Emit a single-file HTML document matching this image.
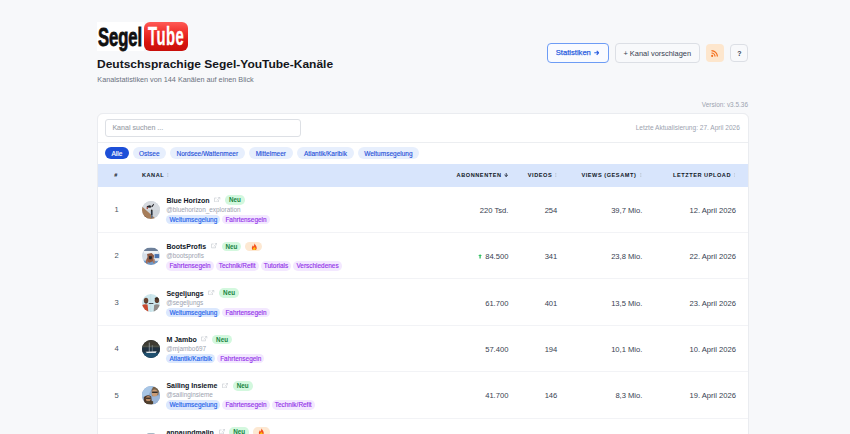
<!DOCTYPE html>
<html><head><meta charset="utf-8">
<style>
*{box-sizing:border-box;margin:0;padding:0}
html,body{width:850px;height:434px;overflow:hidden}
body{background:#f7f8fa;font-family:"Liberation Sans",sans-serif;color:#111827;position:relative}
.abs{position:absolute}
.nw{white-space:nowrap}
/* logo */
.logo{left:96.8px;top:21.9px;width:91.4px;height:29.4px}
.logo .wb{position:absolute;left:0;top:0;width:47.5px;height:29.4px;background:#fff}
.logo .seg{position:absolute;left:1.2px;top:0.9px;font-weight:bold;font-size:25.2px;line-height:29.4px;color:#111;transform:scaleX(0.66);transform-origin:0 0;letter-spacing:-0.1px;-webkit-text-stroke:0.8px #111}
.logo .red{position:absolute;left:46.9px;top:0;width:44.5px;height:29.4px;border-radius:6px;background:linear-gradient(#ff5a55 0%,#f0312c 35%,#d9140f 70%,#c80f0a 100%)}
.logo .tube{position:absolute;left:4.3px;top:0.5px;font-weight:bold;font-size:26px;line-height:29.4px;color:#fff;transform:scaleX(0.57);transform-origin:0 0;letter-spacing:0.9px;-webkit-text-stroke:0.3px #fff}
h1{position:absolute;left:96.9px;top:58px;font-size:10.5px;line-height:12px;font-weight:bold;color:#14161b;transform:scaleX(1.142);transform-origin:0 0;white-space:nowrap}
.sub{left:97.3px;top:74.5px;font-size:7.25px;line-height:9px;color:#6b7280}
.btn{position:absolute;height:19.4px;border-radius:4px;font-size:7.3px;line-height:17.4px;text-align:center;white-space:nowrap}
.b1{-webkit-text-stroke:0.25px currentColor;left:547px;top:43.2px;width:62px;border:1px solid #6d9cf5;color:#2b5fe0;background:#f9fbff}
.b2{padding-top:0.8px;font-size:7.45px;left:614.6px;top:43.2px;width:85.3px;border:1px solid #dcdfe5;color:#374151;background:#f8f9fb}
.b3{left:706.2px;top:43.8px;width:17.6px;height:18px;background:#fde6cd;border-radius:4px}
.b4{left:730.3px;top:44px;width:18.2px;height:18px;border:1px solid #dcdfe5;background:#f8f9fb;font-size:7px;line-height:17.6px;font-weight:bold;color:#374151}
.ver{right:102px;top:99.5px;font-size:6.45px;line-height:9px;color:#9ca3af}
.card{left:96.6px;top:112.5px;width:652.2px;height:340px;background:#fff;border:1px solid #eaecf0;border-radius:6px;box-shadow:0 0.5px 1px rgba(0,0,0,0.03)}
.search{left:105.2px;top:119.4px;width:195.6px;height:17.2px;border:1px solid #dde0e5;border-radius:3px;background:#fff}
.search span{position:absolute;left:6.2px;top:3.5px;font-size:7.1px;line-height:9px;color:#9aa0a9;-webkit-text-stroke:0.1px currentColor}
.upd{right:110.2px;top:123.4px;font-size:6.55px;line-height:9px;color:#9ca3af}
.sep{left:98px;top:142px;width:650.2px;height:1px;background:#eceef1}
.pill{position:absolute;top:147.4px;text-align:center;-webkit-text-stroke:0.12px currentColor;height:12px;border-radius:6px;background:#e7effd;color:#1d4ed8;font-size:6.5px;line-height:14.4px;white-space:nowrap}
.pill.on{background:#1d4fd8;color:#fff}
.thead{left:98px;top:163.8px;width:650.2px;height:22.9px;background:#d8e5fc}
.th{position:absolute;top:7.2px;font-size:5.6px;line-height:9px;font-weight:bold;letter-spacing:0.55px;color:#111827;white-space:nowrap}
.sico{position:absolute;top:9.3px;width:1.6px;height:4px}.sico svg{display:block}
.row{position:absolute;left:98px;width:650.2px;height:46.4px;border-bottom:1px solid #f2f3f6}
.num{position:absolute;left:16.6px;font-size:7.6px;line-height:9px;color:#4b5563}
.av{position:absolute;left:43.7px;width:18.2px;height:18.2px;border-radius:50%;overflow:hidden}
.name{position:absolute;left:68.4px;font-size:7px;line-height:9px;font-weight:bold;color:#111827;white-space:nowrap;display:flex;align-items:center}
.ext{display:inline-block;width:6.3px;height:5.3px;margin-left:4.7px;position:relative;top:-0.6px}
.badge{display:inline-block;height:9.6px;border-radius:4.8px;font-size:6.3px;line-height:10.8px;padding:0 3.9px;background:#d3f8de;color:#16833f;font-weight:bold;margin-left:4.5px}
.fire{background:#fde8d2;padding:0 5.1px;margin-left:4.2px;font-size:6px}
.handle{position:absolute;left:68.2px;font-size:6.4px;line-height:9px;color:#9ca3af;white-space:nowrap}
.tags{position:absolute;left:68.4px;display:flex;gap:2.2px}
.tag{height:9.6px;border-radius:4.8px;font-size:6.45px;line-height:10px;padding:0 3px;white-space:nowrap;-webkit-text-stroke:0.15px currentColor}
.tb{background:#dbe8fe;color:#2563eb}
.tp{background:#f3e8ff;color:#9333ea}
.cell{position:absolute;font-size:7.6px;line-height:9px;color:#374151;white-space:nowrap;text-align:right}
.num{top:18.4px}
.av{top:14.1px}
.name{top:9.1px;height:9px}
.name .badge{position:relative;top:0}
.handle{top:18.2px}
.tags{top:28px}
.cell{top:19px}
.c1{right:239.8px}.c2{right:190.9px}.c3{right:105.8px}.c4{right:12.3px}
.up{margin-right:2.9px;vertical-align:0.2px}
.si{color:#9ca3af;font-weight:normal;letter-spacing:0}
.arr{letter-spacing:0}
</style></head><body>
<div class="abs logo"><div class="wb"></div><div class="seg">Segel</div><div class="red"><div class="tube">Tube</div></div></div>
<h1>Deutschsprachige Segel-YouTube-Kanäle</h1>
<div class="abs sub nw">Kanalstatistiken von 144 Kanälen auf einen Blick</div>
<div class="btn b1"><span style="position:absolute;left:7.8px;top:-0.3px;font-size:7.6px">Statistiken</span><svg style="position:absolute;left:45.6px;top:6.3px" width="5.6" height="5.6" viewBox="0 0 10 10"><path d="M0.5 5 H8 M4.8 1.5 L8.5 5 L4.8 8.5" fill="none" stroke="#2b5fe0" stroke-width="2"/></svg></div>
<div class="btn b2">+ Kanal vorschlagen</div>
<div class="btn b3"><svg style="position:absolute;left:5.2px;top:5.9px" width="7.1" height="7" viewBox="0 0 10 10"><circle cx="1.6" cy="8.4" r="1.5" fill="#f36d1b"/><path d="M0.6 4.3 A5.1 5.1 0 0 1 5.7 9.4" fill="none" stroke="#f36d1b" stroke-width="1.7"/><path d="M0.6 0.9 A8.5 8.5 0 0 1 9.1 9.4" fill="none" stroke="#f36d1b" stroke-width="1.7"/></svg></div>
<div class="btn b4">?</div>
<div class="abs ver nw">Version: v3.5.36</div>
<div class="abs card"></div>
<div class="abs search"><span>Kanal suchen ...</span></div>
<div class="abs upd nw">Letzte Aktualisierung: 27. April 2026</div>
<div class="abs sep"></div>
<div class="pill on" style="left:105.3px;width:23.3px">Alle</div><div class="pill" style="left:133.0px;width:32.6px">Ostsee</div><div class="pill" style="left:170.0px;width:74.7px">Nordsee/Wattenmeer</div><div class="pill" style="left:248.8px;width:44.0px">Mittelmeer</div><div class="pill" style="left:296.8px;width:57.2px">Atlantik/Karibik</div><div class="pill" style="left:357.6px;width:61.6px">Weltumsegelung</div>
<div class="abs thead">
<div class="th" style="left:16.3px">#</div><div class="th" style="left:43.9px">KANAL</div><div class="sico" style="left:69.0px"><svg class="sic" width="1.6" height="4" viewBox="0 0 2 5"><rect x="0.4" y="0" width="1.2" height="1.3" fill="#b9c2d0"/><rect x="0.4" y="1.85" width="1.2" height="1.3" fill="#b9c2d0"/><rect x="0.4" y="3.7" width="1.2" height="1.3" fill="#b9c2d0"/></svg></div><div class="th" style="left:358.6px">ABONNENTEN</div><svg width="4.4" height="4" viewBox="0 0 9 8" style="position:absolute;left:406px;top:9.4px"><path d="M4.5 0 V7 M1 3.8 L4.5 7.2 L8 3.8" fill="none" stroke="#111827" stroke-width="1.7"/></svg><div class="th" style="left:429.8px">VIDEOS</div><div class="sico" style="left:457.0px"><svg class="sic" width="1.6" height="4" viewBox="0 0 2 5"><rect x="0.4" y="0" width="1.2" height="1.3" fill="#b9c2d0"/><rect x="0.4" y="1.85" width="1.2" height="1.3" fill="#b9c2d0"/><rect x="0.4" y="3.7" width="1.2" height="1.3" fill="#b9c2d0"/></svg></div><div class="th" style="left:483.4px">VIEWS (GESAMT)</div><div class="sico" style="left:542.4px"><svg class="sic" width="1.6" height="4" viewBox="0 0 2 5"><rect x="0.4" y="0" width="1.2" height="1.3" fill="#b9c2d0"/><rect x="0.4" y="1.85" width="1.2" height="1.3" fill="#b9c2d0"/><rect x="0.4" y="3.7" width="1.2" height="1.3" fill="#b9c2d0"/></svg></div><div class="th" style="left:575.0px">LETZTER UPLOAD</div><div class="sico" style="left:635.6px"><svg class="sic" width="1.6" height="4" viewBox="0 0 2 5"><rect x="0.4" y="0" width="1.2" height="1.3" fill="#b9c2d0"/><rect x="0.4" y="1.85" width="1.2" height="1.3" fill="#b9c2d0"/><rect x="0.4" y="3.7" width="1.2" height="1.3" fill="#b9c2d0"/></svg></div>
</div>
<!--ROWS-->
<div class="row" style="top:186.7px">
<div class="num">1</div>
<div class="av"><svg width="18.2" height="18.2" viewBox="0 0 18 18"><defs><filter id="bl1" x="-10%" y="-10%" width="120%" height="120%"><feGaussianBlur stdDeviation="0.35"/></filter></defs><g><rect width="18" height="18" fill="#cdd3d9"/><rect width="18" height="9" fill="#d6dadf"/><path d="M0 5.5 L14 18 L0 18Z" fill="#a67d5a"/><path d="M0 12 L7 18 L0 18Z" fill="#8d6446"/><path d="M4.5 5.2 L7.5 4.2 L9.5 5 L11.5 2.6 L12 3.2 L10.6 5.8 L8 6.6 L5.5 6.4Z" fill="#26262a"/><path d="M8.6 5.8 L10 5.4 L9.8 6.6Z" fill="#f0f0f0"/><rect x="4.6" y="6" width="1.2" height="2" fill="#a03f35"/><rect x="8.8" y="9.6" width="1.7" height="4.4" fill="#2c3540"/><circle cx="9.6" cy="9.3" r="0.8" fill="#2a2622"/><rect x="8.9" y="13.8" width="1.5" height="3" fill="#5d6f86"/></g></svg></div>
<div class="name">Blue Horizon<svg class="ext" viewBox="0 0 12 10"><path d="M5 1.8 H1 V9.2 H8.6 V5.5" fill="none" stroke="#c6cad1" stroke-width="1.2"/><path d="M7.2 0.7 H11.2 V4.6 M11 0.9 L5.2 6.6" fill="none" stroke="#c6cad1" stroke-width="1.2"/></svg><span class="badge">Neu</span></div>
<div class="handle">@bluehorizon_exploration</div>
<div class="tags"><div class="tag tb">Weltumsegelung</div><div class="tag tp">Fahrtensegeln</div></div>
<div class="cell c1">220 Tsd.</div>
<div class="cell c2">254</div>
<div class="cell c3">39,7 Mio.</div>
<div class="cell c4">12. April 2026</div>
</div>
<div class="row" style="top:233.1px">
<div class="num">2</div>
<div class="av"><svg width="18.2" height="18.2" viewBox="0 0 18 18"><defs><filter id="bl2" x="-10%" y="-10%" width="120%" height="120%"><feGaussianBlur stdDeviation="0.35"/></filter></defs><g><rect width="18" height="18" fill="#d5dfe9"/><rect x="0" y="1" width="18" height="3" fill="#6d7f99"/><rect x="2" y="4" width="14" height="2.5" fill="#eef2f6"/><rect y="13.5" width="18" height="4.5" fill="#6f98c6"/><rect x="12.5" y="7" width="4.5" height="4" fill="#4d75b0"/><path d="M5 7 L9.5 6 L12 8.5 L11 14 L7 15.5 L4 13 L5.5 10Z" fill="#8f5b45"/><path d="M7 9 L10 9.5 L9.5 12 L7 12Z" fill="#23262e"/><rect x="4" y="13" width="1.5" height="3.5" fill="#a9674b"/><rect x="11" y="12" width="1.5" height="4" fill="#b17458"/><rect x="13" y="11.5" width="4" height="2" fill="#eceff3"/></g></svg></div>
<div class="name">BootsProfis<svg class="ext" viewBox="0 0 12 10"><path d="M5 1.8 H1 V9.2 H8.6 V5.5" fill="none" stroke="#c6cad1" stroke-width="1.2"/><path d="M7.2 0.7 H11.2 V4.6 M11 0.9 L5.2 6.6" fill="none" stroke="#c6cad1" stroke-width="1.2"/></svg><span class="badge">Neu</span><span class="badge fire"><svg width="6.6" height="7.6" viewBox="0 0 12 14" style="vertical-align:-1.4px"><path d="M6 0.5 C7 3 10.5 5 10.5 9 C10.5 12 8.5 13.5 6 13.5 C3.5 13.5 1.5 12 1.5 9 C1.5 6.5 3 5.5 3.5 4 C4.5 5.5 4.5 6 5 6.5 C5.5 4.5 6.5 3 6 0.5Z" fill="#f4511e"/><path d="M6 7 C7 8.5 8.5 9.5 8.5 11 C8.5 12.5 7.5 13.3 6 13.3 C4.5 13.3 3.5 12.5 3.5 11 C3.5 10 4.5 9.5 5 8.5 C5.5 9.5 6 8.5 6 7Z" fill="#ffc107"/></svg></span></div>
<div class="handle">@bootsprofis</div>
<div class="tags"><div class="tag tp">Fahrtensegeln</div><div class="tag tp">Technik/Refit</div><div class="tag tp">Tutorials</div><div class="tag tp">Verschiedenes</div></div>
<div class="cell c1"><svg class="up" width="4.2" height="4.6" viewBox="0 0 8 9"><path d="M4 0.3 L7.8 4 H5.3 V8.8 H2.7 V4 H0.2Z" fill="#2fbf5f"/></svg>84.500</div>
<div class="cell c2">341</div>
<div class="cell c3">23,8 Mio.</div>
<div class="cell c4">22. April 2026</div>
</div>
<div class="row" style="top:279.5px">
<div class="num">3</div>
<div class="av"><svg width="18.2" height="18.2" viewBox="0 0 18 18"><defs><filter id="bl3" x="-10%" y="-10%" width="120%" height="120%"><feGaussianBlur stdDeviation="0.35"/></filter></defs><g><rect width="18" height="18" fill="#cde7ed"/><rect x="8.5" y="0" width="0.5" height="18" fill="#bcd6dd"/><path d="M0 11 Q2.5 9.5 5.5 10.5 L6.3 18 L0 18Z" fill="#c94a2f"/><ellipse cx="4" cy="6.4" rx="2.2" ry="2.7" fill="#6a4634"/><path d="M2.3 7.6 Q4 9.5 5.7 7.6 L5.3 9 Q4 10 2.8 9Z" fill="#3a2a22"/><path d="M11.5 18 L12 11 Q14.5 9.5 17.5 11 L18 18Z" fill="#8f8a87"/><ellipse cx="14.8" cy="6.2" rx="2.2" ry="2.8" fill="#5f4030"/><path d="M12.5 4.2 Q14.8 2 17 4.2 L16.5 5.5 L13 5.5Z" fill="#3b2a20"/><path d="M6.2 9.6 Q7.5 8.6 9 9.2 Q10.5 8.6 11.8 9.6 Q9 10.4 6.2 9.6Z" fill="#34393d"/></g></svg></div>
<div class="name">Segeljungs<svg class="ext" viewBox="0 0 12 10"><path d="M5 1.8 H1 V9.2 H8.6 V5.5" fill="none" stroke="#c6cad1" stroke-width="1.2"/><path d="M7.2 0.7 H11.2 V4.6 M11 0.9 L5.2 6.6" fill="none" stroke="#c6cad1" stroke-width="1.2"/></svg><span class="badge">Neu</span></div>
<div class="handle">@segeljungs</div>
<div class="tags"><div class="tag tb">Weltumsegelung</div><div class="tag tp">Fahrtensegeln</div></div>
<div class="cell c1">61.700</div>
<div class="cell c2">401</div>
<div class="cell c3">13,5 Mio.</div>
<div class="cell c4">23. April 2026</div>
</div>
<div class="row" style="top:325.9px">
<div class="num">4</div>
<div class="av"><svg width="18.2" height="18.2" viewBox="0 0 18 18"><defs><filter id="bl4" x="-10%" y="-10%" width="120%" height="120%"><feGaussianBlur stdDeviation="0.35"/></filter></defs><g><rect width="18" height="18" fill="#1c2733"/><rect width="18" height="6" fill="#3e3b32"/><rect y="5.5" width="18" height="2" fill="#4a5047"/><rect y="7.5" width="18" height="5" fill="#1f3140"/><rect y="12.5" width="18" height="5.5" fill="#1f4f6e"/><rect x="6.8" y="2.5" width="0.6" height="9.5" fill="#b9c3c9"/><rect x="9.8" y="5" width="0.5" height="7" fill="#98a3aa"/><path d="M3.5 11.6 L14.5 11.2 L13.5 12.8 L4.8 12.8Z" fill="#dfe3e6"/></g></svg></div>
<div class="name">M Jambo<svg class="ext" viewBox="0 0 12 10"><path d="M5 1.8 H1 V9.2 H8.6 V5.5" fill="none" stroke="#c6cad1" stroke-width="1.2"/><path d="M7.2 0.7 H11.2 V4.6 M11 0.9 L5.2 6.6" fill="none" stroke="#c6cad1" stroke-width="1.2"/></svg><span class="badge">Neu</span></div>
<div class="handle">@mjambo697</div>
<div class="tags"><div class="tag tb">Atlantik/Karibik</div><div class="tag tp">Fahrtensegeln</div></div>
<div class="cell c1">57.400</div>
<div class="cell c2">194</div>
<div class="cell c3">10,1 Mio.</div>
<div class="cell c4">10. April 2026</div>
</div>
<div class="row" style="top:372.3px">
<div class="num">5</div>
<div class="av"><svg width="18.2" height="18.2" viewBox="0 0 18 18"><defs><filter id="bl5" x="-10%" y="-10%" width="120%" height="120%"><feGaussianBlur stdDeviation="0.35"/></filter></defs><g><rect width="18" height="18" fill="#8ca9cc"/><path d="M0 0 L11 0 L6 10 L0 11Z" fill="#a8c6e6"/><path d="M11 1 Q15 0 17 4 L16 9 L10 10 L9.5 4Z" fill="#7a6246"/><ellipse cx="12.5" cy="7" rx="3" ry="3.6" fill="#c89b76"/><rect x="10" y="5.5" width="5.5" height="1.4" fill="#2f2c2a"/><path d="M10 11 L18 9.5 L18 18 L9 18Z" fill="#9ab5d8"/><path d="M1.5 18 L2 11 Q5.5 7.5 9 10.5 L10 18Z" fill="#4e3627"/><ellipse cx="6.2" cy="12.6" rx="2.4" ry="2.8" fill="#b98a66"/><rect x="4" y="11.5" width="4.6" height="1.2" fill="#2a2725"/><rect x="4" y="15" width="7" height="3" fill="#50412f"/></g></svg></div>
<div class="name">Sailing Insieme<svg class="ext" viewBox="0 0 12 10"><path d="M5 1.8 H1 V9.2 H8.6 V5.5" fill="none" stroke="#c6cad1" stroke-width="1.2"/><path d="M7.2 0.7 H11.2 V4.6 M11 0.9 L5.2 6.6" fill="none" stroke="#c6cad1" stroke-width="1.2"/></svg><span class="badge">Neu</span></div>
<div class="handle">@sailinginsieme</div>
<div class="tags"><div class="tag tb">Weltumsegelung</div><div class="tag tp">Fahrtensegeln</div><div class="tag tp">Technik/Refit</div></div>
<div class="cell c1">41.700</div>
<div class="cell c2">146</div>
<div class="cell c3">8,3 Mio.</div>
<div class="cell c4">19. April 2026</div>
</div>
<div class="row" style="top:418.7px">
<div class="num">6</div>
<div class="av"><svg width="18.2" height="18.2" viewBox="0 0 18 18"><rect width="18" height="18" fill="#8aa3b5"/><rect width="18" height="8" fill="#a9bac6"/></svg></div>
<div class="name">annaundmalin<svg class="ext" viewBox="0 0 12 10"><path d="M5 1.8 H1 V9.2 H8.6 V5.5" fill="none" stroke="#c6cad1" stroke-width="1.2"/><path d="M7.2 0.7 H11.2 V4.6 M11 0.9 L5.2 6.6" fill="none" stroke="#c6cad1" stroke-width="1.2"/></svg><span class="badge">Neu</span><span class="badge fire"><svg width="6.6" height="7.6" viewBox="0 0 12 14" style="vertical-align:-1.4px"><path d="M6 0.5 C7 3 10.5 5 10.5 9 C10.5 12 8.5 13.5 6 13.5 C3.5 13.5 1.5 12 1.5 9 C1.5 6.5 3 5.5 3.5 4 C4.5 5.5 4.5 6 5 6.5 C5.5 4.5 6.5 3 6 0.5Z" fill="#f4511e"/><path d="M6 7 C7 8.5 8.5 9.5 8.5 11 C8.5 12.5 7.5 13.3 6 13.3 C4.5 13.3 3.5 12.5 3.5 11 C3.5 10 4.5 9.5 5 8.5 C5.5 9.5 6 8.5 6 7Z" fill="#ffc107"/></svg></span></div>
<div class="handle">@annaundmalin</div>
<div class="tags"><div class="tag tp">Fahrtensegeln</div></div>
<div class="cell c1">40.100</div>
<div class="cell c2">300</div>
<div class="cell c3">7,9 Mio.</div>
<div class="cell c4">20. April 2026</div>
</div>
<!--/ROWS-->
</body></html>
